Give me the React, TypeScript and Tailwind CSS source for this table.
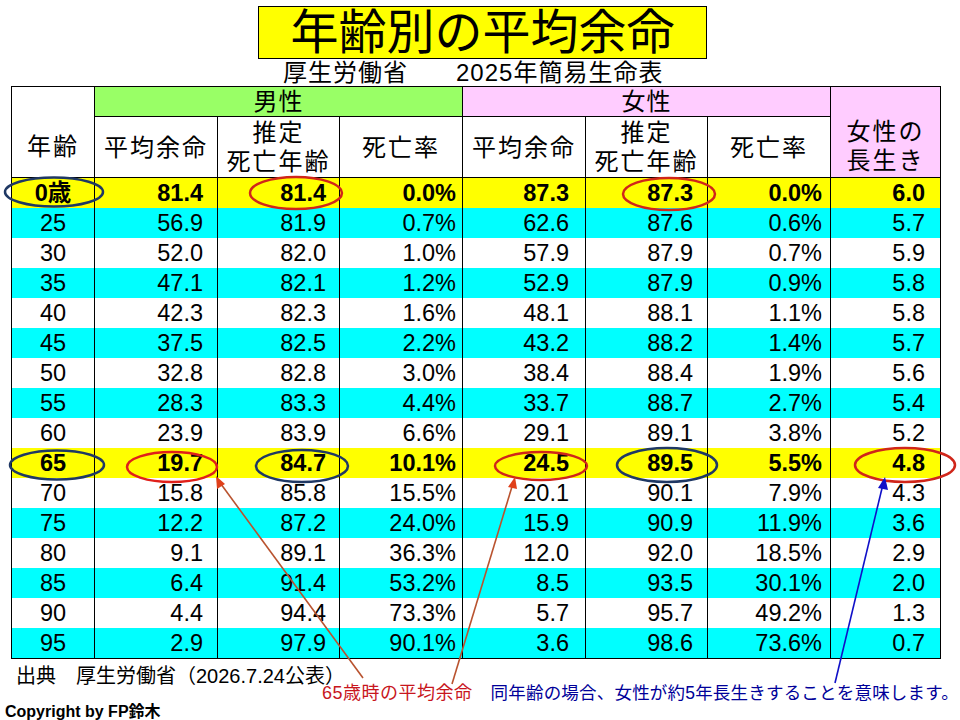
import React from 'react';

type Row = {
  age: string;
  mAvg: string;
  mEst: string;
  mRate: string;
  fAvg: string;
  fEst: string;
  fRate: string;
  diff: string;
  bg: 'y' | 'c' | 'w';
};

const raw: [string, string, string, string, string, string, string, string][] = [
  ['0歳', '81.4', '81.4', '0.0%', '87.3', '87.3', '0.0%', '6.0'],
  ['25', '56.9', '81.9', '0.7%', '62.6', '87.6', '0.6%', '5.7'],
  ['30', '52.0', '82.0', '1.0%', '57.9', '87.9', '0.7%', '5.9'],
  ['35', '47.1', '82.1', '1.2%', '52.9', '87.9', '0.9%', '5.8'],
  ['40', '42.3', '82.3', '1.6%', '48.1', '88.1', '1.1%', '5.8'],
  ['45', '37.5', '82.5', '2.2%', '43.2', '88.2', '1.4%', '5.7'],
  ['50', '32.8', '82.8', '3.0%', '38.4', '88.4', '1.9%', '5.6'],
  ['55', '28.3', '83.3', '4.4%', '33.7', '88.7', '2.7%', '5.4'],
  ['60', '23.9', '83.9', '6.6%', '29.1', '89.1', '3.8%', '5.2'],
  ['65', '19.7', '84.7', '10.1%', '24.5', '89.5', '5.5%', '4.8'],
  ['70', '15.8', '85.8', '15.5%', '20.1', '90.1', '7.9%', '4.3'],
  ['75', '12.2', '87.2', '24.0%', '15.9', '90.9', '11.9%', '3.6'],
  ['80', '9.1', '89.1', '36.3%', '12.0', '92.0', '18.5%', '2.9'],
  ['85', '6.4', '91.4', '53.2%', '8.5', '93.5', '30.1%', '2.0'],
  ['90', '4.4', '94.4', '73.3%', '5.7', '95.7', '49.2%', '1.3'],
  ['95', '2.9', '97.9', '90.1%', '3.6', '98.6', '73.6%', '0.7'],
];

// 0歳 and 65 are highlighted yellow, the rest alternate cyan / white
const rows: Row[] = raw.map((r, i) => ({
  age: r[0],
  mAvg: r[1],
  mEst: r[2],
  mRate: r[3],
  fAvg: r[4],
  fEst: r[5],
  fRate: r[6],
  diff: r[7],
  bg: i === 0 || i === 9 ? 'y' : i % 2 === 1 ? 'c' : 'w',
}));

const bgClass = { y: 'bg-[#ffff00] font-bold', c: 'bg-[#00ffff]', w: 'bg-white' };

const td = 'border-x border-black p-0 align-middle';

// ellipses and arrows drawn over the table
const Marks = () => (
  <svg className="absolute inset-0 pointer-events-none" width="960" height="720" viewBox="0 0 960 720">
    <g fill="none" strokeWidth="2.5">
      <ellipse cx="54" cy="192" rx="49" ry="14.5" stroke="#1f3864" />
      <ellipse cx="296" cy="193" rx="46" ry="16" stroke="#d0261a" />
      <ellipse cx="669" cy="194" rx="46" ry="16" stroke="#d0261a" />
      <ellipse cx="57" cy="465" rx="47" ry="14.5" stroke="#1f3864" />
      <ellipse cx="172" cy="467" rx="45" ry="15" stroke="#e0201a" />
      <ellipse cx="302" cy="466" rx="46" ry="16" stroke="#1f3864" />
      <ellipse cx="541" cy="466" rx="46" ry="14" stroke="#d0261a" />
      <ellipse cx="667" cy="465" rx="50" ry="17" stroke="#1f3864" />
      <ellipse cx="905" cy="465" rx="50" ry="17" stroke="#d0261a" />
    </g>
    <g strokeWidth="1.6">
      <line x1="363" y1="678" x2="218" y2="480" stroke="#b9532f" />
      <line x1="452" y1="684" x2="514" y2="480" stroke="#b9532f" />
      <line x1="835" y1="683" x2="884" y2="480" stroke="#1010c8" />
    </g>
    <polygon points="216,476 217,489 225,484" fill="#e0401a" />
    <polygon points="515,477 508,487 517,489" fill="#e0401a" />
    <polygon points="885,477 878,488 888,490" fill="#1010c8" />
  </svg>
);

const App: React.FC = () => {
  return (
    <div className="relative w-[960px] h-[720px] overflow-hidden bg-white text-black font-['Liberation_Sans','Noto_Sans_CJK_JP',sans-serif]">
      <div className="mt-[6px] ml-[258px] w-[449px] h-[53px] bg-[#ffff00] border border-black flex items-center justify-center text-[48px] leading-none">
        年齢別の平均余命
      </div>

      <div className="h-[27px] flex items-center ml-[283px] text-[24px] leading-none whitespace-nowrap">
        <span className="tracking-[1px]">厚生労働省</span>
        <span className="ml-[48px] tracking-[1px]">2025年簡易生命表</span>
      </div>

      <table className="ml-[11px] w-[929px] table-fixed border-collapse border border-black">
        <colgroup>
          <col className="w-[83px]" />
          <col className="w-[123px]" />
          <col className="w-[122px]" />
          <col className="w-[123px]" />
          <col className="w-[123px]" />
          <col className="w-[122px]" />
          <col className="w-[123px]" />
          <col className="w-[110px]" />
        </colgroup>
        <thead className="text-[24px] font-normal">
          <tr className="h-[30px]">
            <th rowSpan={2} className="border border-black bg-white font-normal align-bottom pb-[16px] leading-[29px] tracking-[2px]">
              年齢
            </th>
            <th colSpan={3} className="border border-black bg-[#99ff66] font-normal leading-[29px] tracking-[1px]">
              男性
            </th>
            <th colSpan={3} className="border border-black bg-[#ffccff] font-normal leading-[29px] tracking-[1px]">
              女性
            </th>
            <th rowSpan={2} className="border border-black bg-[#ffccff] font-normal align-bottom pb-[2px] leading-[29px] tracking-[2px]">
              女性の
              <br />
              長生き
            </th>
          </tr>
          <tr className="h-[61px]">
            {['m', 'f'].map((g) => (
              <React.Fragment key={g}>
                <th className="border border-black bg-white font-normal leading-[29px] tracking-[2px]">平均余命</th>
                <th className="border border-black bg-white font-normal leading-[29px] tracking-[2px]">
                  推定
                  <br />
                  死亡年齢
                </th>
                <th className="border border-black bg-white font-normal leading-[29px] tracking-[2px]">死亡率</th>
              </React.Fragment>
            ))}
          </tr>
        </thead>
        <tbody className="text-[23.5px] leading-[30px]">
          {rows.map((r) => (
            <tr key={r.age} className={`h-[30px] ${bgClass[r.bg]}`}>
              <td className={`${td} text-center`}>{r.age}</td>
              <td className={`${td} text-right pr-[14px]`}>{r.mAvg}</td>
              <td className={`${td} text-right pr-[13px]`}>{r.mEst}</td>
              <td className={`${td} text-right pr-[6px]`}>{r.mRate}</td>
              <td className={`${td} text-right pr-[16px]`}>{r.fAvg}</td>
              <td className={`${td} text-right pr-[14px]`}>{r.fEst}</td>
              <td className={`${td} text-right pr-[8px]`}>{r.fRate}</td>
              <td className={`${td} text-right pr-[15px]`}>{r.diff}</td>
            </tr>
          ))}
        </tbody>
      </table>

      <div className="mt-[5px] pl-[16px] h-[24px] text-[20px] leading-[24px] whitespace-nowrap">出典　厚生労働省（2026.7.24公表）</div>

      <div className="-mt-[4px] h-[19px] flex text-[18px] leading-[19px] whitespace-nowrap">
        <span className="shrink-0 ml-[322px] tracking-[0.5px] text-[#c8161d]">65歳時の平均余命</span>
        <span className="shrink-0 ml-[18px] text-[17.5px] tracking-[0.2px] text-[#000099]">同年齢の場合、女性が約5年長生きすることを意味します。</span>
      </div>

      <div className="pl-[5px] h-[17px] text-[16px] leading-[17px] font-bold whitespace-nowrap">Copyright by FP鈴木</div>

      <Marks />
    </div>
  );
};

export default App;
